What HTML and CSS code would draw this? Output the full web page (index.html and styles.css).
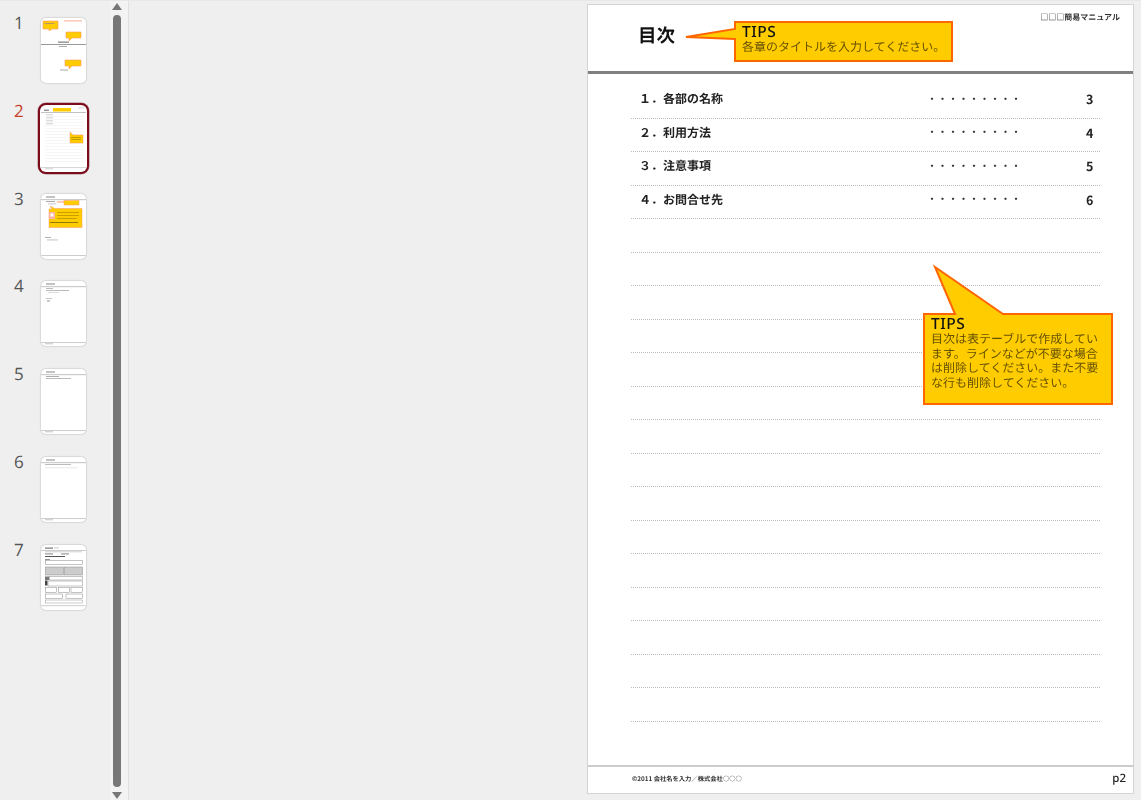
FILE: index.html
```html
<!DOCTYPE html>
<html lang="ja">
<head>
<meta charset="utf-8">
<title>簡易マニュアル</title>
<link rel="stylesheet" href="styles.css">
</head>
<body>
<div class="app">
  <aside class="sidebar">
    <div class="thumb-item">
      <span class="num">1</span>
      <div class="thumb"><svg viewBox="0 0 45 65" class="mini">
        <rect x="23" y="2" width="18" height="1.5" fill="#fbc9b8"/>
        <rect x="0" y="26" width="45" height="1" fill="#999"/>
        <path d="M2 3H17V11H11L8 13V11H2Z" fill="#fc0" stroke="#f96" stroke-width=".6"/>
        <path d="M25 14H40V20H31L28 23V20H25Z" fill="#fc0" stroke="#f96" stroke-width=".6"/>
        <path d="M24 42H40V48H31L28 51V48H24Z" fill="#fc0" stroke="#f96" stroke-width=".6"/>
        <rect x="3.500" y="5" width="10" height=".8" fill="#a88"/>
        <rect x="17" y="23.500" width="11" height="1.300" fill="#888"/>
        <rect x="18" y="28" width="8" height="1" fill="#aaa"/>
        <rect x="19" y="51.500" width="8" height="1" fill="#aaa"/>
      </svg></div>
    </div>
    <div class="thumb-item">
      <span class="num num-active">2</span>
      <div class="thumb thumb-active"><svg viewBox="0 0 45 65" class="mini">
        <rect x="3" y="3.500" width="5" height="1.500" fill="#999"/>
        <rect x="12" y="2" width="18" height="3.500" fill="#fc0"/>
        <rect x="37" y="1.500" width="6" height=".8" fill="#ccc"/>
        <rect x="0" y="6" width="45" height=".6" fill="#999"/>
        <rect x="5" y="8.500" width="7" height=".7" fill="#bbb"/>
        <rect x="5" y="11.500" width="7" height=".7" fill="#bbb"/>
        <rect x="5" y="14.500" width="7" height=".7" fill="#bbb"/>
        <rect x="5" y="17.500" width="7" height=".7" fill="#bbb"/>
        <g fill="#ececec">
          <rect x="4" y="10" width="38" height=".5"/><rect x="4" y="13" width="38" height=".5"/>
          <rect x="4" y="16" width="38" height=".5"/><rect x="4" y="19" width="38" height=".5"/>
          <rect x="4" y="22" width="38" height=".5"/><rect x="4" y="25" width="38" height=".5"/>
          <rect x="4" y="28" width="38" height=".5"/><rect x="4" y="31" width="38" height=".5"/>
          <rect x="4" y="34" width="38" height=".5"/><rect x="4" y="37" width="38" height=".5"/>
          <rect x="4" y="40" width="38" height=".5"/><rect x="4" y="43" width="38" height=".5"/>
          <rect x="4" y="46" width="38" height=".5"/><rect x="4" y="49" width="38" height=".5"/>
          <rect x="4" y="52" width="38" height=".5"/><rect x="4" y="55" width="38" height=".5"/>
        </g>
        <path d="M29 26L32 29H42V37H29V30Z" fill="#fc0" stroke="#f96" stroke-width=".5"/>
        <rect x="30" y="31" width="10" height=".7" fill="#a80"/>
        <rect x="30" y="33" width="10" height=".7" fill="#a80"/>
        <rect x="0" y="61" width="45" height=".6" fill="#bbb"/>
        <rect x="4" y="62.500" width="8" height=".7" fill="#bbb"/>
      </svg></div>
    </div>
    <div class="thumb-item">
      <span class="num">3</span>
      <div class="thumb"><svg viewBox="0 0 45 65" class="mini">
        <rect x="5" y="2.500" width="9" height="1" fill="#888"/>
        <rect x="0" y="5.500" width="45" height=".6" fill="#999"/>
        <rect x="5" y="7" width="9" height="1" fill="#aaa"/>
        <rect x="7" y="9.500" width="8" height=".8" fill="#bbb"/>
        <rect x="16" y="7.500" width="7" height="1" fill="#f96"/>
        <rect x="23" y="6.500" width="15" height="4.500" fill="#fc0" stroke="#f96" stroke-width=".5"/>
        <path d="M9 12L14 14.500H41V33.500H8V15H11Z" fill="#fc0" stroke="#f96" stroke-width=".5"/>
        <rect x="8" y="18" width="6" height="7" fill="#f8b0a0"/>
        <rect x="9.500" y="19.500" width="3" height="3" fill="#fff"/>
        <rect x="16" y="18" width="22" height=".7" fill="#b08a00"/>
        <rect x="16" y="21" width="22" height=".7" fill="#b08a00"/>
        <rect x="16" y="24" width="20" height=".7" fill="#b08a00"/>
        <rect x="9" y="28" width="28" height=".9" fill="#8a7000"/>
        <rect x="4" y="43" width="6" height=".9" fill="#aaa"/>
        <rect x="6" y="45.500" width="11" height=".9" fill="#bbb"/>
        <rect x="0" y="61" width="45" height=".6" fill="#aaa"/>
      </svg></div>
    </div>
    <div class="thumb-item">
      <span class="num">4</span>
      <div class="thumb"><svg viewBox="0 0 45 65" class="mini">
        <rect x="5" y="2.500" width="9" height="1" fill="#888"/>
        <rect x="0" y="5.500" width="45" height=".6" fill="#999"/>
        <rect x="5" y="7" width="7" height=".8" fill="#aaa"/>
        <rect x="5" y="9" width="23" height=".8" fill="#aaa"/>
        <rect x="7" y="11" width="11" height=".7" fill="#ccc"/>
        <rect x="5" y="17" width="6" height=".8" fill="#bbb"/>
        <rect x="6" y="19.500" width="3" height=".9" fill="#888"/>
        <rect x="0" y="61" width="45" height=".6" fill="#aaa"/>
        <rect x="4" y="62.500" width="8" height=".7" fill="#aaa"/>
      </svg></div>
    </div>
    <div class="thumb-item">
      <span class="num">5</span>
      <div class="thumb"><svg viewBox="0 0 45 65" class="mini">
        <rect x="5" y="2.500" width="9" height="1" fill="#888"/>
        <rect x="0" y="5.500" width="45" height=".6" fill="#999"/>
        <rect x="5" y="7" width="13" height=".8" fill="#999"/>
        <rect x="5" y="9" width="25" height=".8" fill="#aaa"/>
        <rect x="0" y="61" width="45" height=".6" fill="#aaa"/>
        <rect x="4" y="62.500" width="8" height=".7" fill="#aaa"/>
      </svg></div>
    </div>
    <div class="thumb-item">
      <span class="num">6</span>
      <div class="thumb"><svg viewBox="0 0 45 65" class="mini">
        <rect x="5" y="2.500" width="9" height="1" fill="#888"/>
        <rect x="0" y="5.500" width="45" height=".6" fill="#999"/>
        <rect x="4" y="7" width="26" height=".8" fill="#aaa"/>
        <rect x="4" y="10.500" width="33" height=".7" fill="#ddd"/>
        <rect x="0" y="61" width="45" height=".6" fill="#aaa"/>
        <rect x="4" y="62.500" width="8" height=".7" fill="#aaa"/>
      </svg></div>
    </div>
    <div class="thumb-item">
      <span class="num">7</span>
      <div class="thumb"><svg viewBox="0 0 45 65" class="mini">
        <rect x="4" y="2.500" width="8" height="1.200" fill="#777"/>
        <rect x="13" y="2.500" width="5" height=".8" fill="#bbb"/>
        <rect x="0" y="5" width="45" height=".6" fill="#aaa"/>
        <rect x="4" y="6.500" width="37" height=".7" fill="#bbb"/>
        <rect x="4" y="8.500" width="8" height=".9" fill="#777"/>
        <rect x="20" y="8.500" width="8" height=".9" fill="#777"/>
        <rect x="4" y="11" width="20" height="1" fill="#555"/>
        <rect x="4" y="14" width="5" height=".8" fill="#777"/>
        <rect x="4.500" y="15.500" width="37" height="4" fill="#fff" stroke="#888" stroke-width=".5"/>
        <rect x="4.500" y="22" width="18" height="8" fill="#ccc" stroke="#888" stroke-width=".5"/>
        <rect x="23.500" y="22" width="18" height="8" fill="#ccc" stroke="#888" stroke-width=".5"/>
        <rect x="8.500" y="31.500" width="33" height="3.500" fill="#fff" stroke="#888" stroke-width=".5"/>
        <rect x="4" y="31.500" width="4" height="3.500" fill="#777"/>
        <rect x="4" y="35.500" width="2.500" height="5" fill="#444"/>
        <rect x="7" y="36" width="34.500" height="5" fill="#fff" stroke="#888" stroke-width=".5"/>
        <rect x="4.500" y="42.500" width="11" height="5" fill="#fff" stroke="#888" stroke-width=".5"/>
        <rect x="17.500" y="42.500" width="11" height="5" fill="#fff" stroke="#888" stroke-width=".5"/>
        <rect x="30" y="42.500" width="11.500" height="5" fill="#fff" stroke="#888" stroke-width=".5"/>
        <rect x="4.500" y="49" width="17" height="4.500" fill="#fff" stroke="#888" stroke-width=".5"/>
        <rect x="25" y="49" width="16.500" height="4.500" fill="#fff" stroke="#888" stroke-width=".5"/>
        <rect x="4.500" y="55" width="37" height="3" fill="#fff" stroke="#999" stroke-width=".5"/>
        <rect x="0" y="60.500" width="45" height=".6" fill="#aaa"/>
      </svg></div>
    </div>
  </aside>

  <div class="scrollbar">
    <svg class="arrow" viewBox="0 0 10 7"><path d="M5 0L10 7H0Z"/></svg>
    <div class="scroll-thumb"></div>
    <svg class="arrow" viewBox="0 0 10 7"><path d="M0 0H10L5 7Z"/></svg>
  </div>

  <main class="main">
    <article class="page">
      <header class="page-head">
        <h1 class="page-title">目次</h1>
        <div class="doc-name">□□□簡易マニュアル</div>
      </header>

      <div class="toc">
        <div class="toc-row"><span class="toc-name">１．各部の名称</span><span class="toc-dots">・・・・・・・・・</span><span class="toc-page">3</span></div>
        <div class="toc-row"><span class="toc-name">２．利用方法</span><span class="toc-dots">・・・・・・・・・</span><span class="toc-page">4</span></div>
        <div class="toc-row"><span class="toc-name">３．注意事項</span><span class="toc-dots">・・・・・・・・・</span><span class="toc-page">5</span></div>
        <div class="toc-row"><span class="toc-name">４．お問合せ先</span><span class="toc-dots">・・・・・・・・・</span><span class="toc-page">6</span></div>
        <div class="toc-row"></div><div class="toc-row"></div><div class="toc-row"></div>
        <div class="toc-row"></div><div class="toc-row"></div><div class="toc-row"></div>
        <div class="toc-row"></div><div class="toc-row"></div><div class="toc-row"></div>
        <div class="toc-row"></div><div class="toc-row"></div><div class="toc-row"></div>
        <div class="toc-row"></div><div class="toc-row"></div><div class="toc-row"></div>
      </div>

      <footer class="page-foot">
        <span class="copyright">©2011 会社名を入力／株式会社○○○</span>
        <span class="page-no">p2</span>
      </footer>

      <div class="callout callout-title">
        <svg class="callout-shape" width="219" height="41"><path d="M1 1H218V40H1V18L-48 16L1 8Z"/></svg>
        <div class="callout-text callout-oneline"><strong>TIPS</strong>各章のタイトルを入力してください。</div>
      </div>
      <div class="callout callout-table">
        <svg class="callout-shape" width="190" height="92"><path d="M1 1H32L12 -46L80 1H189V91H1Z"/></svg>
        <div class="callout-text"><strong>TIPS</strong>目次は表テーブルで作成しています。ラインなどが不要な場合は削除してください。また不要な行も削除してください。</div>
      </div>
    </article>
  </main>
</div>
</body>
</html>
```

FILE: styles.css
```css
* { box-sizing: border-box; }
html, body { margin: 0; height: 100%; }
body {
  background: #efefef;
  font-family: "Noto Sans CJK JP", "Noto Sans", sans-serif;
  color: #111;
  overflow: hidden;
  text-rendering: geometricPrecision;
}
.app { display: flex; height: 800px; border-top: 1px solid #e8e8e8; }

.sidebar {
  width: 110px;
  flex: none;
  padding-top: 17px;
  display: flex;
  flex-direction: column;
  gap: 22.800px;
}
.thumb-item { display: flex; height: 65px; padding-left: 41px; position: relative; }
.num {
  position: absolute;
  left: 14px;
  top: -5px;
  font: 17px/20px "Open Sans", sans-serif;
  color: #555;
}
.num-active { color: #c8402c; }
.thumb {
  width: 45px;
  height: 65px;
  background: #fff;
  border-radius: 5px;
  box-shadow: 0 0 1px 1px #d8d8d8;
  overflow: hidden;
  position: relative;
}
.thumb-active { box-shadow: 0 0 0 1px #fff, 0 0 0 3px #7a0c1c, 0 0 0 3.500px #b07a80; }
.mini { display: block; width: 45px; height: 65px; filter: blur(.5px); }

.scrollbar {
  width: 19px;
  flex: none;
  padding: 2px 6px 1px 2px;
  background: #f3f3f3;
  border-right: 1px solid #e0e0e0;
  display: flex;
  flex-direction: column;
  align-items: center;
  justify-content: space-between;
}
.arrow { width: 10px; height: 7px; fill: #777; flex: none; }
.scroll-thumb { width: 8px; flex: 1; margin: 5px 0 5px; background: #777; border-radius: 4px; }

.main {
  flex: 1;
  display: flex;
  justify-content: flex-end;
  align-items: flex-start;
  padding: 3px 7px 5px 0;
  min-width: 0;
}
.page {
  width: 547px;
  height: 790px;
  background: #fff;
  border: 1px solid #d4d4d4;
  position: relative;
  display: flex;
  flex-direction: column;
}
.page-head {
  height: 69px;
  flex: none;
  border-bottom: 3px solid #808080;
  display: flex;
  justify-content: space-between;
  padding: 0 13px 0 50px;
}
.page-title { margin: 17px 0 0; font-size: 18.500px; line-height: 26px; font-weight: 700; filter: blur(.3px); }
.doc-name { font-size: 8px; line-height: 12px; margin-top: 7px; font-weight: 700; color: #333; white-space: nowrap; filter: blur(.3px); }

.toc { flex: 1; margin: 11.300px 33px 0 43px; display: flex; flex-direction: column; }
.toc-row {
  height: 33.500px;
  flex: none;
  border-bottom: 1px dotted #bbb;
  display: flex;
  align-items: center;
  font-size: 12px;
  font-weight: 700;
  padding: 0 0 6px 8px;
}
.toc-name { width: 287.500px; flex: none; white-space: nowrap; color: #222; filter: blur(.25px); }
.toc-dots {
  width: 159.500px;
  flex: none;
  font-size: 11px;
  font-weight: 400;
  white-space: nowrap;
  letter-spacing: -.5px;
  color: #333;
  filter: blur(.25px);
}
.toc-page { font-size: 12.500px; color: #222; filter: blur(.25px); }

.page-foot {
  height: 28px;
  flex: none;
  border-top: 2px solid #ccc;
  display: flex;
  align-items: center;
  justify-content: space-between;
  padding: 0 7px 4px 44px;
}
.copyright { font-size: 6.300px; font-weight: 700; color: #333; filter: blur(.25px); }
.page-no { font: 500 11.500px "Noto Sans", sans-serif; color: #222; filter: blur(.25px); }

.callout { position: absolute; }
.callout-title { left: 146px; top: 16px; width: 219px; height: 41px; padding: 3px 0 0 8px; }
.callout-table { left: 335px; top: 308px; width: 190px; height: 92px; padding: 3px 8px 0; }
.callout-shape {
  position: absolute;
  left: 0;
  top: 0;
  overflow: visible;
  fill: #fc0;
  stroke: #f60;
  stroke-width: 2px;
}
.callout-text {
  position: relative;
  font-size: 12px;
  line-height: 14.500px;
  color: #665200;
  filter: blur(.2px);
}
.callout-oneline { white-space: nowrap; }
.callout-text strong {
  display: block;
  margin-bottom: 1px;
  font: 500 15.500px/15px "Noto Sans", sans-serif;
  letter-spacing: .5px;
  color: #111;
}
```
